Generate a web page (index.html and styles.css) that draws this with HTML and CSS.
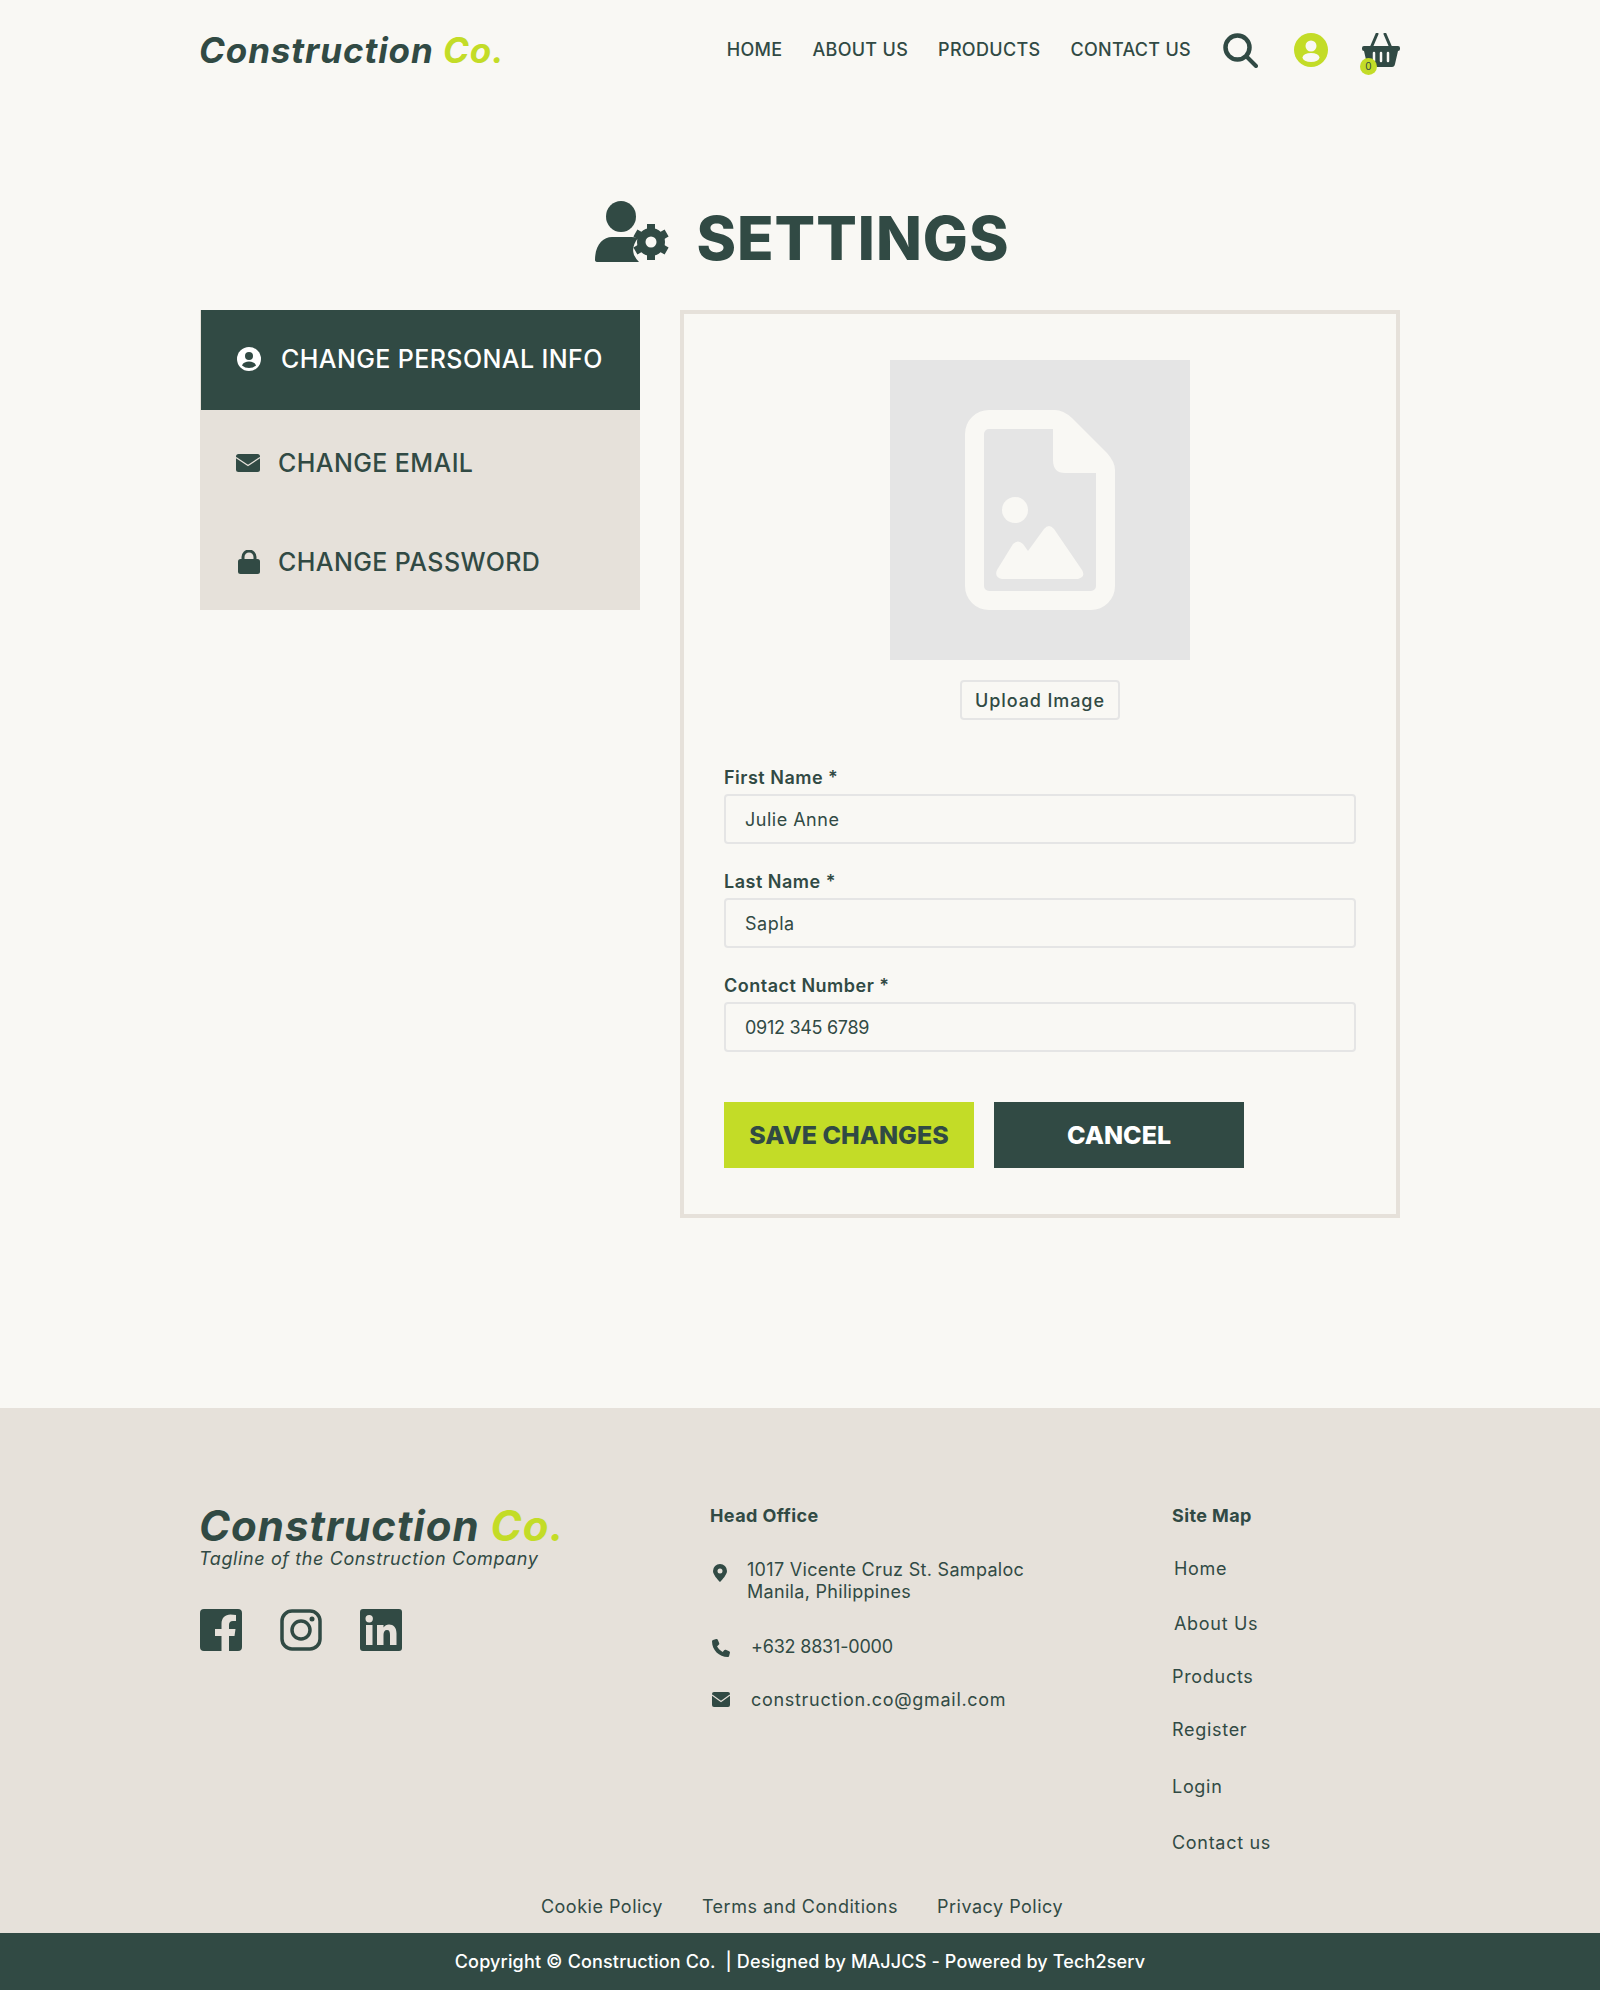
FILE: index.html
```html
<!DOCTYPE html>
<html lang="en">

<head>
    <meta charset="UTF-8">
    <meta name="viewport" content="width=device-width, initial-scale=1.0">
    <title>Settings</title>
    <link rel="stylesheet" href="styles.css">
</head>

<body>
    <header class="site-header">
        <a class="logo" href="#">Construction <span class="logo-accent">Co.</span></a>
        <nav class="main-nav">
            <a href="#">HOME</a>
            <a href="#">ABOUT US</a>
            <a href="#">PRODUCTS</a>
            <a href="#">CONTACT US</a>
        </nav>
        <div class="header-icons">
            <svg class="icon-search" viewBox="0 0 35 35" width="35" height="35">
                <circle cx="14.500" cy="14.500" r="12" fill="none" stroke="#314a44" stroke-width="4.500" />
                <path d="M23.500 23.500L33 33" fill="none" stroke="#314a44" stroke-width="4" stroke-linecap="round" />
            </svg>
            <svg class="icon-account" viewBox="0 0 34 34" width="34" height="34">
                <circle cx="17" cy="17" r="17" fill="#c3dc27" />
                <circle cx="17" cy="13" r="5.500" fill="#f9f8f4" />
                <ellipse cx="17" cy="24.500" rx="8.500" ry="4.500" fill="#f9f8f4" />
            </svg>
            <div class="basket">
                <svg viewBox="0 0 38 34" width="38" height="34">
                    <path d="M9 15L15 1M29 15L23 1" fill="none" stroke="#314a44" stroke-width="3" stroke-linecap="round" />
                    <path d="M2 13H36Q38 13 38 15V16Q38 18 36 18L33 31Q32.500 34 30 34H8Q5.500 34 5 31L2 18Q0 18 0 16V15Q0 13 2 13Z" fill="#314a44" />
                    <path d="M12 20V28M19 20V28M26 20V28" stroke="#f9f8f4" stroke-width="2.500" stroke-linecap="round" />
                </svg>
                <span class="basket-count">0</span>
            </div>
        </div>
    </header>

    <main class="page">
        <h1 class="page-title">
            <svg viewBox="0 0 74 61" width="74" height="61">
                <ellipse cx="26" cy="15.500" rx="15" ry="15.500" fill="#314a44" />
                <path d="M0 59C0 44 8 36 17 36H36Q40 36 43 37Q36 46 39 54Q41 58 44 61H3Q0 61 0 59Z" fill="#314a44" />
                <circle cx="56" cy="41" r="10" fill="none" stroke="#314a44" stroke-width="8" />
                <path d="M56 41L56 23M56 41L71.600 32M56 41L71.600 50M56 41L56 59M56 41L40.400 50M56 41L40.400 32" stroke="#314a44" stroke-width="8" />
                <circle cx="56" cy="41" r="5.500" fill="#f9f8f4" />
            </svg>
            <span class="title-text">SETTINGS</span>
        </h1>

        <div class="settings-layout">
            <ul class="side-menu">
                <li class="side-item active">
                    <svg class="side-icon" viewBox="0 0 24 24" width="24" height="24">
                        <circle cx="12" cy="12" r="12" fill="#fff" />
                        <circle cx="12" cy="9" r="4" fill="#314a44" />
                        <path d="M5 18.500C6 15.500 9 14.500 12 14.500S18 15.500 19 18.500Q16 21 12 21T5 18.500Z" fill="#314a44" />
                    </svg>
                    <span class="side-text">CHANGE PERSONAL INFO</span>
                </li>
                <li class="side-item">
                    <svg class="side-icon" viewBox="0 0 24 18" width="24" height="18">
                        <rect width="24" height="18" rx="2.500" fill="#314a44" />
                        <path d="M0 3.500L12 11.500L24 3.500" fill="none" stroke="#e6e1da" stroke-width="1.300" />
                    </svg>
                    <span class="side-text">CHANGE EMAIL</span>
                </li>
                <li class="side-item">
                    <svg class="side-icon icon-lock" viewBox="0 0 22 24" width="22" height="24">
                        <path d="M5 10V7A6 6 0 0 1 17 7V10" fill="none" stroke="#314a44" stroke-width="3" />
                        <rect y="9" width="22" height="15" rx="2.500" fill="#314a44" />
                    </svg>
                    <span class="side-text">CHANGE PASSWORD</span>
                </li>
            </ul>

            <form class="settings-panel">
                <div class="photo-box">
                    <svg viewBox="0 0 150 200" width="150" height="200">
                        <path fill="#f9f8f4" fill-rule="evenodd" d="M24 0H90Q98 0 107 8L142 43Q150 52 150 60V176A24 24 0 0 1 126 200H24A24 24 0 0 1 0 176V24A24 24 0 0 1 24 0ZM24 19A5 5 0 0 0 19 24V176A5 5 0 0 0 24 181H126A5 5 0 0 0 131 176V63H100Q88 63 88 50V19Z" />
                        <circle cx="50" cy="100" r="13" fill="#f9f8f4" />
                        <path fill="#f9f8f4" d="M37 169H113Q121 167 117 160L89 119Q84 113 79 119L63 141L58 134Q53 129 48 134L32 160Q29 167 37 169Z" />
                    </svg>
                </div>
                <button type="button" class="upload-btn">Upload Image</button>

                <div class="field">
                    <label for="first-name">First Name *</label>
                    <input type="text" id="first-name" value="Julie Anne">
                </div>
                <div class="field">
                    <label for="last-name">Last Name *</label>
                    <input type="text" id="last-name" value="Sapla">
                </div>
                <div class="field">
                    <label for="contact">Contact Number *</label>
                    <input type="text" class="input-number" id="contact" value="0912 345 6789">
                </div>

                <div class="form-actions">
                    <button type="submit" class="btn btn-save">SAVE CHANGES</button>
                    <button type="button" class="btn btn-cancel">CANCEL</button>
                </div>
            </form>
        </div>
    </main>

    <footer class="site-footer">
        <div class="footer-columns">
            <div class="footer-brand">
                <a class="footer-logo" href="#">Construction <span class="logo-accent">Co.</span></a>
                <p class="tagline">Tagline of the Construction Company</p>
                <div class="socials">
                    <svg viewBox="0 0 42 42" width="42" height="42">
                        <path fill="#314a44" fill-rule="evenodd" d="M4 0H38A4 4 0 0 1 42 4V38A4 4 0 0 1 38 42H29V27H34.500L35.500 20H29V16Q29 12 33 12H36V6Q33 5.500 30.500 5.500C25 5.500 21.500 9 21.500 15V20H15V27H21.500V42H4A4 4 0 0 1 0 38V4A4 4 0 0 1 4 0Z" />
                    </svg>
                    <svg viewBox="0 0 42 42" width="42" height="42">
                        <rect x="2" y="2" width="38" height="38" rx="10" fill="none" stroke="#314a44" stroke-width="3.500" />
                        <circle cx="21" cy="21" r="9" fill="none" stroke="#314a44" stroke-width="3.500" />
                        <circle cx="32" cy="10" r="2.500" fill="#314a44" />
                    </svg>
                    <svg viewBox="0 0 42 42" width="42" height="42">
                        <path fill="#314a44" fill-rule="evenodd" d="M3 0H39A3 3 0 0 1 42 3V39A3 3 0 0 1 39 42H3A3 3 0 0 1 0 39V3A3 3 0 0 1 3 0ZM6 16V36H12.500V16ZM9.200 6A3.700 3.700 0 1 0 9.200 13.400A3.700 3.700 0 1 0 9.200 6ZM17 16V36H23.500V26C23.500 23 24.500 21 27 21S30 23 30 26V36H36.500V24.500C36.500 18.500 33.500 15.500 29 15.500Q25.500 15.500 23.500 18.500V16Z" />
                    </svg>
                </div>
            </div>

            <div class="footer-office">
                <h4 class="footer-heading">Head Office</h4>
                <div class="office-row office-address">
                    <svg class="office-icon" viewBox="0 0 14 18" width="14" height="18">
                        <path fill="#314a44" fill-rule="evenodd" d="M7 0A7 7 0 0 1 14 7C14 10.500 9.500 15.500 7 18C4.500 15.500 0 10.500 0 7A7 7 0 0 1 7 0ZM7 4.500A2.500 2.500 0 1 0 7 9.500A2.500 2.500 0 1 0 7 4.500Z" />
                    </svg>
                    <span>1017 Vicente Cruz St. Sampaloc<br>Manila, Philippines</span>
                </div>
                <div class="office-row office-phone">
                    <svg class="office-icon" viewBox="0 0 512 512" width="18" height="18">
                        <path fill="#314a44" d="M164.900 24.600c-7.700-18.600-28-28.500-47.400-23.200l-88 24C12.100 30.200 0 46 0 64C0 311.400 200.600 512 448 512c18 0 33.800-12.100 38.600-29.500l24-88c5.300-19.400-4.600-39.700-23.200-47.400l-96-40c-16.300-6.800-35.200-2.100-46.300 11.600L304.700 368C234.300 334.700 177.300 277.700 144 207.300L193.300 167c13.700-11.200 18.400-30 11.600-46.300l-40-96z" />
                    </svg>
                    <span>+632 8831-0000</span>
                </div>
                <div class="office-row office-mail">
                    <svg class="office-icon" viewBox="0 0 18 15" width="18" height="15">
                        <rect width="18" height="15" rx="2" fill="#314a44" />
                        <path d="M0 3L9 9.500L18 3" fill="none" stroke="#e6e1da" stroke-width="1.100" />
                    </svg>
                    <span>construction.co@gmail.com</span>
                </div>
            </div>

            <div class="footer-sitemap">
                <h4 class="footer-heading">Site Map</h4>
                <a href="#">Home</a>
                <a href="#">About Us</a>
                <a href="#">Products</a>
                <a href="#">Register</a>
                <a href="#">Login</a>
                <a href="#">Contact us</a>
            </div>
        </div>

        <div class="footer-policies">
            <a href="#">Cookie Policy</a>
            <a href="#">Terms and Conditions</a>
            <a href="#">Privacy Policy</a>
        </div>

        <div class="copyright">Copyright © Construction Co.&nbsp; | Designed by MAJJCS - Powered by Tech2serv</div>
    </footer>
</body>

</html>
```

FILE: styles.css
```css
* {
    box-sizing: border-box;
}

body {
    margin: 0;
    background: #f9f8f4;
    color: #314a44;
    font-family: "Inter", "Liberation Sans", sans-serif;
}

a {
    color: inherit;
    text-decoration: none;
}

.logo-accent {
    color: #c3dc27;
}

/* header */
.site-header {
    display: flex;
    align-items: center;
    height: 100px;
    width: 1200px;
    margin: 0 auto;
}

.logo {
    margin-left: -1px;
    margin-right: auto;
    font-size: 35px;
    font-weight: 700;
    font-style: italic;
    letter-spacing: 0.9px;
}

.main-nav {
    display: flex;
    gap: 30px;
    font-size: 18px;
    font-weight: 500;
    letter-spacing: 0.3px;
    line-height: 22px;
}

.header-icons {
    display: flex;
    align-items: center;
    margin-left: 32px;
}

.icon-search {
    margin-right: 36px;
}

.icon-account {
    margin-right: 34px;
}

.basket {
    position: relative;
    width: 38px;
    height: 34px;
}

.basket svg {
    display: block;
}

.basket-count {
    position: absolute;
    left: -2px;
    top: 25px;
    width: 17px;
    height: 17px;
    border-radius: 50%;
    background: #c3dc27;
    font-size: 10px;
    line-height: 17px;
    text-align: center;
}

/* title */
.page {
    width: 1200px;
    margin: 0 auto 190px;
    padding-top: 100px;
}

.page-title {
    display: flex;
    justify-content: center;
    align-items: center;
    gap: 27px;
    height: 62px;
    margin: 0 0 48px;
    padding-left: 5px;
    font-size: 60px;
    font-weight: 800;
    letter-spacing: 1px;
    line-height: 62px;
}

.title-text {
    padding-top: 14px;
}

/* side menu */
.settings-layout {
    display: grid;
    grid-template-columns: 440px 720px;
    column-gap: 40px;
    align-items: start;
}

.side-menu {
    list-style: none;
    margin: 0;
    padding: 0;
    background: #e6e1da;
}

.side-item {
    display: flex;
    align-items: center;
    height: 98px;
    padding-left: 36px;
    font-size: 25px;
    font-weight: 500;
    letter-spacing: 0.4px;
}

.side-item:nth-child(3) {
    padding-top: 2px;
}

.side-item.active {
    height: 100px;
    margin-left: 1px;
    margin-bottom: 4px;
    padding-bottom: 2px;
    background: #314a44;
    color: #fff;
}

.side-icon {
    flex: none;
    margin-right: 18px;
}

.side-item.active .side-icon {
    margin-right: 20px;
}

.icon-lock {
    margin-left: 2px;
}

/* form */
.settings-panel {
    display: flex;
    flex-direction: column;
    height: 908px;
    border: 4px solid #e6e1da;
    padding: 46px 40px;
}

.photo-box {
    display: flex;
    align-items: center;
    justify-content: center;
    width: 300px;
    height: 300px;
    margin: 0 auto;
    background: #e5e5e5;
}

.upload-btn {
    width: 160px;
    height: 40px;
    margin: 20px auto 47px;
    border: 2px solid #e5e5e5;
    border-radius: 4px;
    background: transparent;
    color: #314a44;
    font-family: inherit;
    font-size: 18px;
    font-weight: 500;
    letter-spacing: 0.9px;
    padding: 0;
}

.field {
    margin-bottom: 27px;
}

.field label {
    display: block;
    margin-bottom: 5px;
    font-size: 18px;
    font-weight: 600;
    letter-spacing: 0.5px;
    line-height: 22px;
}

.field input {
    display: block;
    width: 632px;
    height: 50px;
    border: 2px solid #e5e5e5;
    border-radius: 4px;
    background: transparent;
    color: #314a44;
    font-family: inherit;
    font-size: 18px;
    letter-spacing: 0.5px;
    padding: 0 19px;
}

.field .input-number {
    letter-spacing: -0.3px;
}

.form-actions {
    display: flex;
    gap: 20px;
    margin-top: 23px;
}

.btn {
    width: 250px;
    height: 66px;
    border: 0;
    font-family: inherit;
    font-size: 25px;
    font-weight: 800;
    padding: 0;
}

.btn-save {
    background: #c3dc27;
    color: #314a44;
}

.btn-cancel {
    background: #314a44;
    color: #fff;
}

/* footer */
.site-footer {
    background: #e6e1da;
    font-size: 18px;
    line-height: 22px;
}

.footer-columns {
    display: grid;
    grid-template-columns: 510px 461px 1fr;
    width: 1200px;
    margin: 0 auto;
    padding-top: 96px;
}

.footer-logo {
    display: block;
    margin-left: -1px;
    font-size: 42px;
    font-weight: 700;
    font-style: italic;
    letter-spacing: 1px;
    line-height: 44px;
}

.tagline {
    margin: 0 0 0 -1px;
    font-style: italic;
    letter-spacing: 0.6px;
}

.socials {
    display: flex;
    gap: 38px;
    margin-top: 39px;
}

.footer-office,
.footer-sitemap {
    padding-top: 1px;
}

.footer-heading {
    margin: 0;
    font-size: 18px;
    font-weight: 700;
    letter-spacing: 0.4px;
}

.office-row {
    display: flex;
    align-items: flex-start;
    margin-top: 32px;
}

.office-address {
    letter-spacing: 0.3px;
}

.office-phone {
    margin-top: 33px;
    letter-spacing: -0.2px;
}

.office-mail {
    margin-top: 31px;
    letter-spacing: 0.7px;
}

.office-icon {
    flex: none;
    margin-left: 2px;
    margin-top: 3px;
}

.office-address .office-icon {
    margin-left: 3px;
    margin-right: 20px;
    margin-top: 5px;
}

.office-phone .office-icon,
.office-mail .office-icon {
    margin-right: 21px;
}

.footer-sitemap {
    padding-left: 1px;
}

.footer-sitemap a {
    display: block;
    margin-top: 32px;
    letter-spacing: 0.7px;
}

.footer-sitemap a:nth-child(2) {
    margin-top: 31px;
    padding-left: 2px;
}

.footer-sitemap a:nth-child(3) {
    padding-left: 2px;
    margin-top: 33px;
}

.footer-sitemap a:nth-child(4),
.footer-sitemap a:nth-child(5) {
    margin-top: 31px;
}

.footer-sitemap a:nth-child(6) {
    margin-top: 35px;
}

.footer-sitemap a:nth-child(7) {
    margin-top: 34px;
}

.footer-policies {
    display: flex;
    justify-content: center;
    gap: 39px;
    margin-top: 42px;
    padding-bottom: 15px;
    padding-left: 4px;
    letter-spacing: 0.5px;
}

.copyright {
    height: 57px;
    background: #314a44;
    color: #fff;
    font-weight: 500;
    letter-spacing: 0.15px;
    line-height: 57px;
    text-align: center;
}
```
